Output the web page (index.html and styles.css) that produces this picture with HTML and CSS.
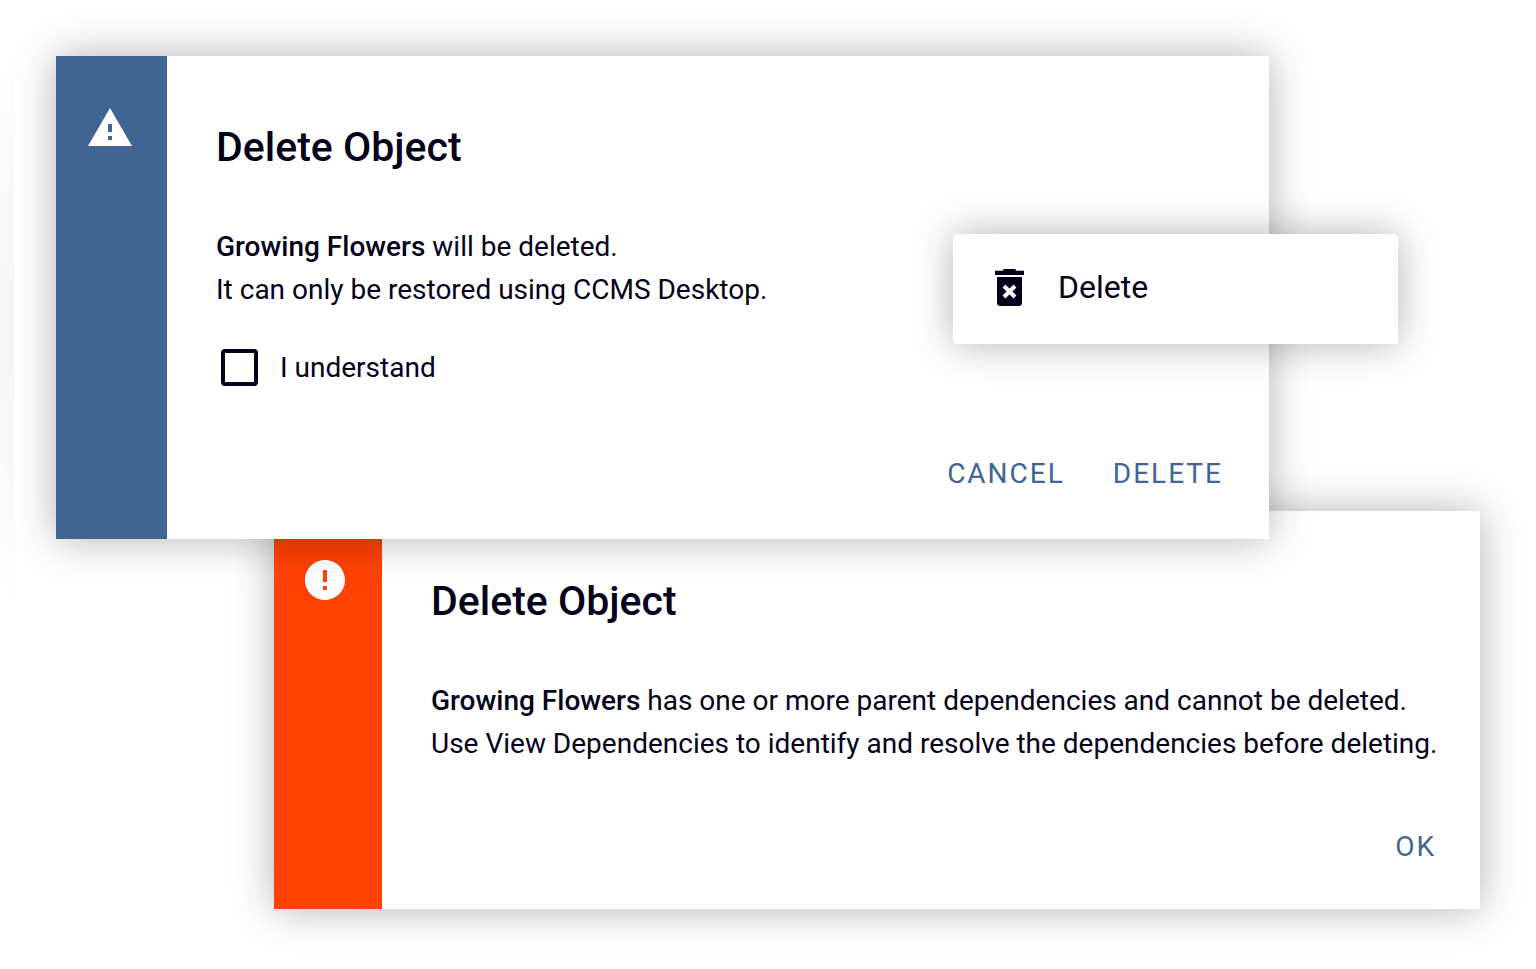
FILE: index.html
```html
<!DOCTYPE html>
<html lang="en">
<head>
<meta charset="utf-8">
<title>Delete Object</title>
<link rel="stylesheet" href="styles.css">
</head>
<body>
<main class="stage">
  <section class="dialog dialog-confirm" role="dialog" aria-labelledby="confirm-title">
    <div class="rail rail-warning">
      <svg class="rail-icon" viewBox="0 0 24 24" aria-hidden="true"><path d="M1 21h22L12 2 1 21zm12-3h-2v-2h2v2zm0-4h-2v-4h2v4z"/></svg>
    </div>
    <div class="content">
      <h2 class="title" id="confirm-title">Delete Object</h2>
      <p class="message"><strong>Growing Flowers</strong> will be deleted.<br>It can only be restored using CCMS Desktop.</p>
      <label class="check"><input class="check-box" type="checkbox"><span>I understand</span></label>
      <div class="actions">
        <button class="action" type="button">CANCEL</button>
        <button class="action" type="button">DELETE</button>
      </div>
    </div>
    <div class="menu">
      <button class="menu-item" type="button">
        <svg class="menu-icon" viewBox="0 0 29 37" aria-hidden="true">
          <path d="M0 1.700h7.500L9 0h11l1.500 1.700H29v4.300H0z"/>
          <path d="M2 8h25v25.500a3.500 3.500 0 0 1-3.500 3.500h-18A3.500 3.500 0 0 1 2 33.500z"/>
          <path class="menu-icon-cross" d="M9 17l11 11M20 17L9 28"/>
        </svg>
        <span>Delete</span>
      </button>
    </div>
  </section>
  <section class="dialog dialog-blocked" role="dialog" aria-labelledby="blocked-title">
    <div class="rail rail-error">
      <svg class="rail-icon" viewBox="0 0 24 24" aria-hidden="true"><path d="M12 2C6.480 2 2 6.480 2 12s4.480 10 10 10 10-4.480 10-10S17.520 2 12 2zm1 15h-2v-2h2v2zm0-4h-2V7h2v6z"/></svg>
    </div>
    <div class="content">
      <h2 class="title" id="blocked-title">Delete Object</h2>
      <p class="message"><strong>Growing Flowers</strong> has one or more parent dependencies and cannot be deleted.<br>Use View Dependencies to identify and resolve the dependencies before deleting.</p>
      <div class="actions">
        <button class="action" type="button">OK</button>
      </div>
    </div>
  </section>
</main>
</body>
</html>
```
FILE: styles.css
```css
* { box-sizing: border-box; }

body {
  margin: 0;
  background: #fff;
  color: #03021a;
  font-family: Roboto, "Liberation Sans", sans-serif;
  font-size: 28px;
  line-height: 43px;
}

/* Faint shade along the left edge */
.stage {
  padding: 56px;
  background: radial-gradient(ellipse 28px 280px at 14px 50%, #f5f5f5, #f8f8f8 50%, #fff) 0 50px / 14px 560px no-repeat;
}

.dialog {
  position: relative;
  display: flex;
  background: #fff;
  box-shadow: 0 0 40px rgba(0, 0, 0, 0.3);
}

.dialog-confirm { z-index: 1; margin-right: 211px; }
.dialog-blocked { margin-top: -28px; margin-left: 218px; }

.rail { flex: none; }
.rail-warning { width: 111px; padding: 48px 0 0 30px; background: #406592; }
.rail-error { width: 108px; padding: 45px 0 0 27px; background: #ff4203; }
.rail-icon { display: block; width: 48px; height: 48px; fill: #fff; }

.content {
  flex: 1;
  display: flex;
  flex-direction: column;
  align-items: flex-start;
  padding: 66px 0 42px 49px;
}
.dialog-confirm .content { padding-top: 67px; padding-bottom: 45px; }

.title { margin: 0; font-size: 41px; line-height: 48px; font-weight: 500; }
.message { margin: 54px 0 0; white-space: nowrap; }
.message strong { font-weight: 500; }

.check { display: flex; align-items: center; gap: 22px; margin-top: 35px; }
.check-box {
  appearance: none;
  width: 37px;
  height: 37px;
  margin: 0 0 0 5px;
  border: 4px solid #03021a;
  border-radius: 4px;
  background: #fff;
}

.actions {
  display: flex;
  align-self: flex-end;
  gap: 48px;
  margin-top: 62px;
  margin-right: 44px;
}
.dialog-confirm .actions { margin-top: 65px; margin-right: 46px; }

.action {
  padding: 0;
  border: 0;
  background: none;
  color: #406592;
  font: inherit;
  line-height: 40px;
  letter-spacing: 2px;
}

/* Floating menu that overhangs the right side of the dialog */
.menu {
  position: absolute;
  top: 178px;
  right: -129px;
  width: 445px;
  border-radius: 4px;
  background: #fff;
  box-shadow: 0 0 40px rgba(0, 0, 0, 0.3);
}
.menu-item {
  display: flex;
  align-items: center;
  gap: 34px;
  width: 100%;
  height: 110px;
  padding: 0 42px 3px;
  border: 0;
  background: none;
  color: inherit;
  font: inherit;
  font-size: 32px;
}
.menu-icon { width: 29px; height: 37px; fill: #03021a; }
.menu-icon-cross { stroke: #fff; stroke-width: 4px; }
```
